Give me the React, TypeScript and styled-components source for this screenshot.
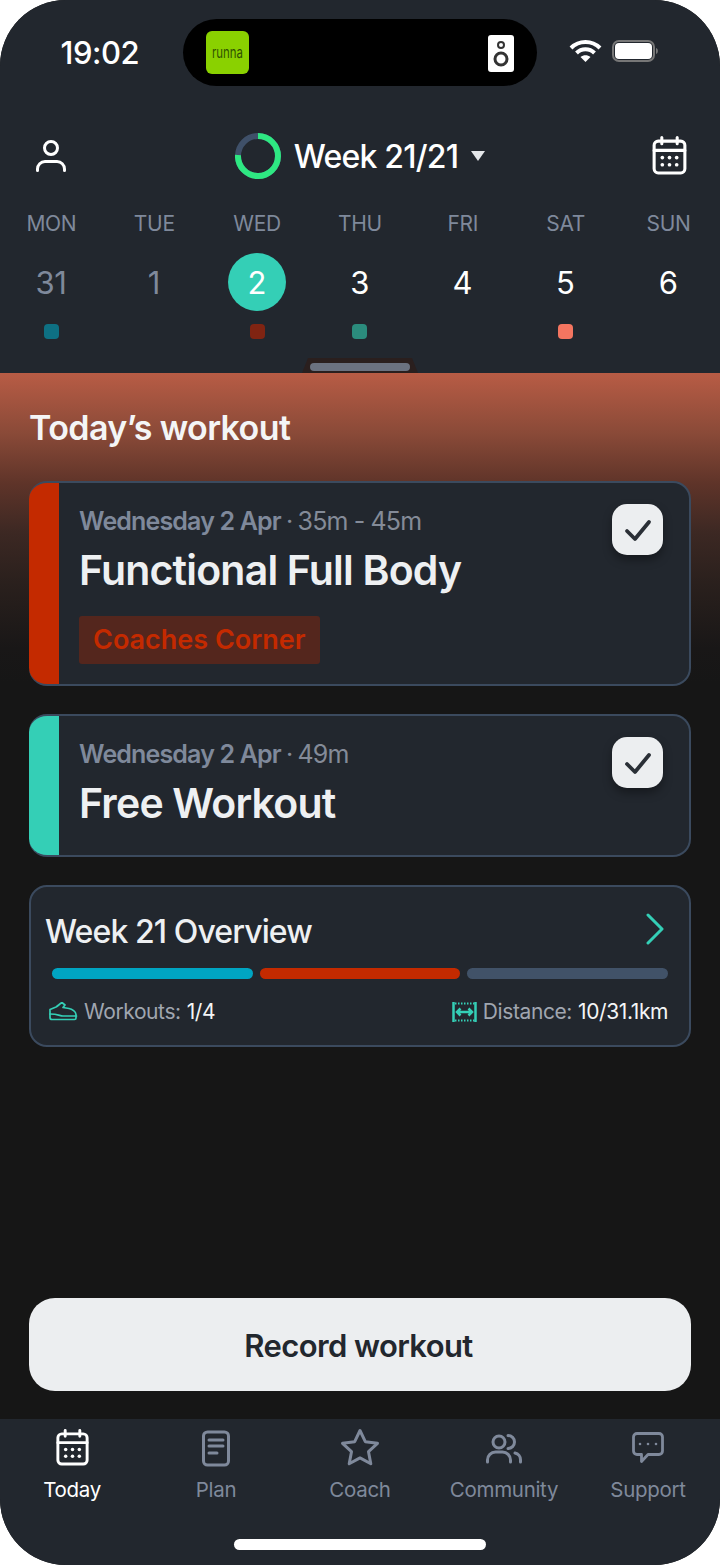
import React from 'react';
import styled, { createGlobalStyle } from 'styled-components';

const GlobalStyle = createGlobalStyle`
  html, body {
    margin: 0;
    padding: 0;
    background: #fff;
    font-family: Inter, "Liberation Sans", sans-serif;
  }
  * { box-sizing: border-box; }
`;

const Phone = styled.div`
  width: 720px;
  height: 1565px;
  border-radius: 66px;
  overflow: hidden;
  display: flex;
  flex-direction: column;
  background: #161616;
`;

const Header = styled.header`
  position: relative;
  height: 373px;
  flex: none;
  background: #22272e;
  color: #fff;
`;

const StatusBar = styled.div`
  display: grid;
  grid-template-columns: 183px 354px 183px;
  height: 67px;
  margin-top: 19px;
  padding-top: 19px;
`;

const Time = styled.div`
  display: flex;
  align-items: center;
  justify-content: flex-end;
  padding-right: 44px;
  height: 67px;
  margin-top: -19px;
  font-size: 31px;
  font-weight: 500;
  letter-spacing: -0.5px;
`;

const Island = styled.div`
  height: 67px;
  margin-top: -19px;
  border-radius: 34px;
  background: #000;
  display: flex;
  align-items: center;
  justify-content: space-between;
  padding: 0 23px 0 23px;
`;

const AppBadge = styled.div`
  width: 43px;
  height: 43px;
  border-radius: 6px;
  background: #8ad100;
  display: flex;
  align-items: center;
  justify-content: center;
`;

const AppWord = styled.span`
  display: inline-block;
  color: #2f5200;
  font-size: 15px;
  transform: scaleX(0.76);
`;

const Speaker = styled.svg`
  width: 26px;
  height: 37px;
  margin-top: 1px;
`;

const StatusIcons = styled.div`
  display: flex;
  align-items: center;
  height: 67px;
  margin-top: -19px;
  padding: 0 0 3px 32px;
  gap: 10px;
`;

const WeekNav = styled.div`
  display: grid;
  grid-template-columns: 1fr auto 1fr;
  align-items: center;
  height: 50px;
  margin-top: 45px;
  padding: 0 30px;
`;

const UserGlyph = styled.svg`
  width: 36px;
  height: 38px;
  margin-left: 3px;
`;

const WeekTitle = styled.div`
  display: flex;
  align-items: center;
  gap: 13px;
  font-size: 32px;
  font-weight: 500;
  letter-spacing: -0.8px;
`;

const Caret = styled.span`
  width: 0;
  height: 0;
  border-left: 7px solid transparent;
  border-right: 7px solid transparent;
  border-top: 10px solid #e4e6e9;
`;

const NavEnd = styled.div`
  justify-self: end;
  height: 41px;
  margin-top: -2px;
`;

const Days = styled.div`
  display: grid;
  grid-template-columns: repeat(7, 1fr);
  margin-top: 29px;
`;

const Day = styled.div`
  display: flex;
  flex-direction: column;
  align-items: center;
`;

const DayName = styled.div`
  font-size: 21px;
  line-height: 28px;
  color: #7f899b;
  letter-spacing: -0.3px;
`;

const DayNum = styled.div<{ $past?: boolean; $active?: boolean }>`
  width: 58px;
  height: 58px;
  margin-top: 15px;
  padding-right: 1px;
  border-radius: 50%;
  display: flex;
  align-items: center;
  justify-content: center;
  font-size: 31px;
  letter-spacing: -0.5px;
  color: ${(p) => (p.$past ? '#7f899b' : '#fff')};
  background: ${(p) => (p.$active ? '#34cfb6' : 'transparent')};
`;

const DayDot = styled.div<{ $color?: string }>`
  width: 15px;
  height: 15px;
  margin-top: 13px;
  border-radius: 4px;
  background: ${(p) => p.$color || 'transparent'};
`;

const HandleTab = styled.div`
  position: absolute;
  left: 302px;
  bottom: 0;
  width: 116px;
  height: 15px;
  background: #2a1f1e;
  clip-path: polygon(6px 0, 110px 0, 116px 100%, 0 100%);
`;

const Handle = styled.div`
  position: absolute;
  left: 310px;
  bottom: 2px;
  width: 100px;
  height: 8px;
  border-radius: 4px;
  background: #6b7280;
`;

const Main = styled.main`
  flex: 1;
  display: flex;
  flex-direction: column;
  padding: 0 29px 28px;
  background: linear-gradient(180deg, #b85c45 0, #8a4a38 60px, #5f3429 110px, #3c2823 160px, #2a201d 210px, #191717 275px, #161616 310px);
`;

const SectionTitle = styled.h1`
  margin: 33px 0 32px;
  font-size: 34px;
  line-height: 43px;
  font-weight: 600;
  letter-spacing: -0.6px;
  color: #f4f5f6;
`;

const Card = styled.div<{ $accent: string; $bottom: number }>`
  position: relative;
  margin-bottom: 28px;
  padding: 20px 28px ${(p) => p.$bottom}px 50px;
  border-radius: 18px;
  background: linear-gradient(90deg, ${(p) => p.$accent} 30px, #22272e 30px);
  border: 2px solid #3b4a5e;
  border-left: none;
`;

const Meta = styled.div`
  font-size: 25px;
  line-height: 36px;
  color: #848b98;
  letter-spacing: -0.85px;
  b {
    font-weight: 600;
    color: #7f899b;
  }
`;

const MetaDot = styled.span`
  margin: 0 -1px;
`;

const CardTitle = styled.div`
  margin-top: 5px;
  font-size: 41px;
  line-height: 52px;
  font-weight: 600;
  letter-spacing: -0.8px;
  color: #eef0f2;
`;

const Tag = styled.div`
  display: inline-block;
  margin-top: 20px;
  padding: 0 15px 0 14px;
  height: 48px;
  line-height: 48px;
  border-radius: 3px;
  background: #54261d;
  color: #c42a00;
  font-size: 27px;
  font-weight: 600;
`;

const Check = styled.div`
  position: absolute;
  top: 21px;
  right: 26px;
  width: 51px;
  height: 51px;
  border-radius: 15px;
  background: #eceef0;
  box-shadow: 0 5px 10px rgba(0, 0, 0, 0.35);
  display: flex;
  align-items: center;
  justify-content: center;
`;

const Overview = styled.div`
  height: 162px;
  padding: 0 21px 0 14px;
  border-radius: 18px;
  background: #22272e;
  border: 2px solid #3b4a5e;
`;

const OverviewHead = styled.div`
  display: flex;
  align-items: center;
  justify-content: space-between;
  height: 65px;
  padding: 24px 3px 0 0;
  font-size: 32px;
  font-weight: 500;
  letter-spacing: -0.9px;
  color: #eef0f2;
`;

const Chevron = styled.svg`
  width: 20px;
  height: 32px;
  margin-top: -6px;
`;

const Bars = styled.div`
  display: grid;
  grid-template-columns: repeat(3, 1fr);
  gap: 7px;
  margin: 16px 0 0 7px;
`;

const Bar = styled.div<{ $color: string }>`
  height: 11px;
  border-radius: 6px;
  background: ${(p) => p.$color};
`;

const Stats = styled.div`
  display: flex;
  align-items: center;
  justify-content: space-between;
  margin: 20px 0 0 4px;
  font-size: 21px;
  color: #a0a6b0;
  letter-spacing: -0.4px;
`;

const Stat = styled.div`
  display: flex;
  align-items: center;
  gap: 6px;
  span { color: #f4f5f6; }
`;

const RecordButton = styled.button`
  margin-top: auto;
  height: 93px;
  flex: none;
  border: none;
  border-radius: 26px;
  padding: 2px 3px 0 0;
  background: #eceef0;
  color: #22272e;
  font-family: inherit;
  font-size: 31px;
  font-weight: 600;
  letter-spacing: -0.6px;
`;

const TabBar = styled.nav`
  position: relative;
  height: 146px;
  flex: none;
  background: #22272e;
  display: grid;
  grid-template-columns: repeat(5, 144px);
  padding-top: 9px;
`;

const TabItem = styled.div<{ $active?: boolean }>`
  display: flex;
  flex-direction: column;
  align-items: center;
  color: ${(p) => (p.$active ? '#fff' : '#7f899b')};
  font-size: 20.5px;
  letter-spacing: -0.3px;
`;

const TabIcon = styled.div`
  width: 40px;
  height: 40px;
  margin-bottom: 9px;
  display: flex;
  justify-content: center;
  svg { display: block; }
`;

const HomeBar = styled.div`
  position: absolute;
  left: 234px;
  bottom: 15px;
  width: 252px;
  height: 11px;
  border-radius: 6px;
  background: #fff;
`;

const days = [
  { name: 'MON', num: '31', past: true, dot: '#0e7083' },
  { name: 'TUE', num: '1', past: true },
  { name: 'WED', num: '2', active: true, dot: '#802412' },
  { name: 'THU', num: '3', dot: '#2b8c7d' },
  { name: 'FRI', num: '4' },
  { name: 'SAT', num: '5', dot: '#f47560' },
  { name: 'SUN', num: '6' },
];

const CalendarGlyph: React.FC<{ size: number }> = ({ size }) => (
  <svg width={size} height={size} viewBox="0 0 40 40" fill="none" stroke="currentColor" strokeWidth="3" strokeLinecap="round">
    <rect x="5" y="6" width="30" height="31" rx="4" />
    <path d="M5 15h30M12.500 2.500v6M27.500 2.500v6" />
    <g fill="currentColor" stroke="none">
      <circle cx="13" cy="22" r="1.800" />
      <circle cx="20" cy="22" r="1.800" />
      <circle cx="27" cy="22" r="1.800" />
      <circle cx="13" cy="29" r="1.800" />
      <circle cx="20" cy="29" r="1.800" />
      <circle cx="27" cy="29" r="1.800" />
    </g>
  </svg>
);

const CheckMark = () => (
  <svg width="30" height="26" viewBox="0 0 30 26" fill="none" stroke="#2a2f36" strokeWidth="3.800" strokeLinecap="round" strokeLinejoin="round">
    <path d="M4 14l8 8L26 5" />
  </svg>
);

const App: React.FC = () => (
  <>
    <GlobalStyle />
    <Phone>
      <Header>
        <StatusBar>
          <Time>19:02</Time>
          <Island>
            <AppBadge><AppWord>runna</AppWord></AppBadge>
            <Speaker viewBox="0 0 26 37">
              <rect width="26" height="37" rx="3" fill="#fff" />
              <circle cx="13" cy="10" r="3" fill="none" stroke="#333" strokeWidth="2" />
              <circle cx="13" cy="24" r="6" fill="none" stroke="#333" strokeWidth="3" />
            </Speaker>
          </Island>
          <StatusIcons>
            <svg width="33" height="24" viewBox="0 0 33 24" fill="none" stroke="#fff" strokeWidth="4">
              <path d="M2 9c8-8 21-8 29 0M7.500 14c5-5 13-5 18 0" />
              <path d="M16.500 23l-5-5c3-2.500 7-2.500 10 0z" fill="#fff" stroke="none" />
            </svg>
            <svg width="48" height="22" viewBox="0 0 48 22">
              <rect x="1" y="1" width="41" height="20" rx="6" fill="none" stroke="#777" strokeWidth="2" />
              <rect x="3" y="3" width="37" height="16" rx="4" fill="#fff" />
              <path d="M44 8c2.500.5 2.500 5.500 0 6z" fill="#777" />
            </svg>
          </StatusIcons>
        </StatusBar>
        <WeekNav>
          <UserGlyph viewBox="0 0 36 38" fill="none" stroke="#fff" strokeWidth="3" strokeLinecap="round">
            <circle cx="18" cy="11" r="6.500" />
            <path d="M4.500 33.500v-1.500a7.500 7.500 0 0 1 7.500-7.500h12a7.500 7.500 0 0 1 7.500 7.500v1.500" />
          </UserGlyph>
          <WeekTitle>
            <svg width="46" height="46" viewBox="0 0 46 46" fill="none" strokeWidth="6">
              <circle cx="23" cy="23" r="20" stroke="#3f5069" />
              <path d="M23 3a20 20 0 1 1-20 19" stroke="#2ee882" />
            </svg>
            Week 21/21
            <Caret />
          </WeekTitle>
          <NavEnd><CalendarGlyph size={41} /></NavEnd>
        </WeekNav>
        <Days>
          {days.map((d) => (
            <Day key={d.name}>
              <DayName>{d.name}</DayName>
              <DayNum $past={d.past} $active={d.active}>{d.num}</DayNum>
              <DayDot $color={d.dot} />
            </Day>
          ))}
        </Days>
        <HandleTab />
        <Handle />
      </Header>
      <Main>
        <SectionTitle>Today’s workout</SectionTitle>
        <Card $accent="#c42a00" $bottom={20}>
          <Meta><b>Wednesday 2 Apr</b> <MetaDot>·</MetaDot> 35m - 45m</Meta>
          <CardTitle>Functional Full Body</CardTitle>
          <Tag>Coaches Corner</Tag>
          <Check><CheckMark /></Check>
        </Card>
        <Card $accent="#34cfb6" $bottom={26}>
          <Meta><b>Wednesday 2 Apr</b> <MetaDot>·</MetaDot> 49m</Meta>
          <CardTitle>Free Workout</CardTitle>
          <Check><CheckMark /></Check>
        </Card>
        <Overview>
          <OverviewHead>
            Week 21 Overview
            <Chevron viewBox="0 0 20 32" fill="none" stroke="#34cfb6" strokeWidth="3" strokeLinecap="round" strokeLinejoin="round">
              <path d="M3 2l14 14L3 30" />
            </Chevron>
          </OverviewHead>
          <Bars>
            <Bar $color="#00a5c2" />
            <Bar $color="#c42a00" />
            <Bar $color="#415268" />
          </Bars>
          <Stats>
            <Stat>
              <svg width="29" height="20" viewBox="0 0 29 20" fill="none" stroke="#34cfb6" strokeWidth="1.700" strokeLinejoin="round" strokeLinecap="round">
                <path d="M1 7.500l6-2.500c2-1 4-3.500 6-4.500l3 2.500-2 2.500 6 1c3 .5 7 3 7 6v3.500c0 1-.5 1.500-1.500 1.500H3c-1.500 0-2-1-2-2z" />
                <path d="M1 12c8 0 10 2 13 2h13.500" />
              </svg>
              Workouts: <span>1/4</span>
            </Stat>
            <Stat>
              <svg width="25" height="20" viewBox="0 0 25 20" fill="none" stroke="#34cfb6" strokeWidth="2">
                <path d="M1.500 0v20M23.500 0v20" strokeWidth="2.500" />
                <path d="M3 1.500h20M3 18.500h20" strokeDasharray="1.500 1.500" />
                <path d="M5 10h15M8.500 6.500L5 10l3.500 3.500M16.500 6.500L20 10l-3.500 3.500" strokeWidth="2.500" />
              </svg>
              Distance: <span>10/31.1km</span>
            </Stat>
          </Stats>
        </Overview>
        <RecordButton>Record workout</RecordButton>
      </Main>
      <TabBar>
        <TabItem $active>
          <TabIcon><CalendarGlyph size={39} /></TabIcon>
          Today
        </TabItem>
        <TabItem>
          <TabIcon>
            <svg width="40" height="40" viewBox="0 0 40 40" fill="none" stroke="currentColor" strokeWidth="3" strokeLinecap="round">
              <rect x="7.500" y="4" width="25" height="33" rx="4" />
              <path d="M13 12h14M13 18h14M13 25h8" />
            </svg>
          </TabIcon>
          Plan
        </TabItem>
        <TabItem>
          <TabIcon>
            <svg width="40" height="40" viewBox="0 0 40 40" fill="none" stroke="currentColor" strokeWidth="3" strokeLinejoin="round">
              <path d="M20 2.500l5.300 11.200 12.200 1.600-9 8.400 2.300 12.100L20 29.900 9.200 35.800l2.300-12.100-9-8.400 12.200-1.600z" />
            </svg>
          </TabIcon>
          Coach
        </TabItem>
        <TabItem>
          <TabIcon>
            <svg width="40" height="40" viewBox="0 0 40 40" fill="none" stroke="currentColor" strokeWidth="3" strokeLinecap="round">
              <circle cx="15" cy="14" r="6" />
              <path d="M3.500 34v-2a8 8 0 0 1 8-8h7a8 8 0 0 1 8 8v2M24 7.500a6.500 6.500 0 0 1 0 13M31 25a7 7 0 0 1 5.500 7v2" />
            </svg>
          </TabIcon>
          Community
        </TabItem>
        <TabItem>
          <TabIcon>
            <svg width="40" height="40" viewBox="0 0 40 40" fill="none" stroke="currentColor" strokeWidth="2.800" strokeLinejoin="round">
              <path d="M9 5.500h22a3.500 3.500 0 0 1 3.500 3.500v14a3.500 3.500 0 0 1-3.500 3.500H20l-6.500 7v-7H9a3.500 3.500 0 0 1-3.500-3.500V9A3.500 3.500 0 0 1 9 5.500z" />
              <g fill="currentColor" stroke="none">
                <circle cx="12" cy="16" r="1.300" />
                <circle cx="20" cy="16" r="1.300" />
                <circle cx="28" cy="16" r="1.300" />
              </g>
            </svg>
          </TabIcon>
          Support
        </TabItem>
        <HomeBar />
      </TabBar>
    </Phone>
  </>
);

export default App;
